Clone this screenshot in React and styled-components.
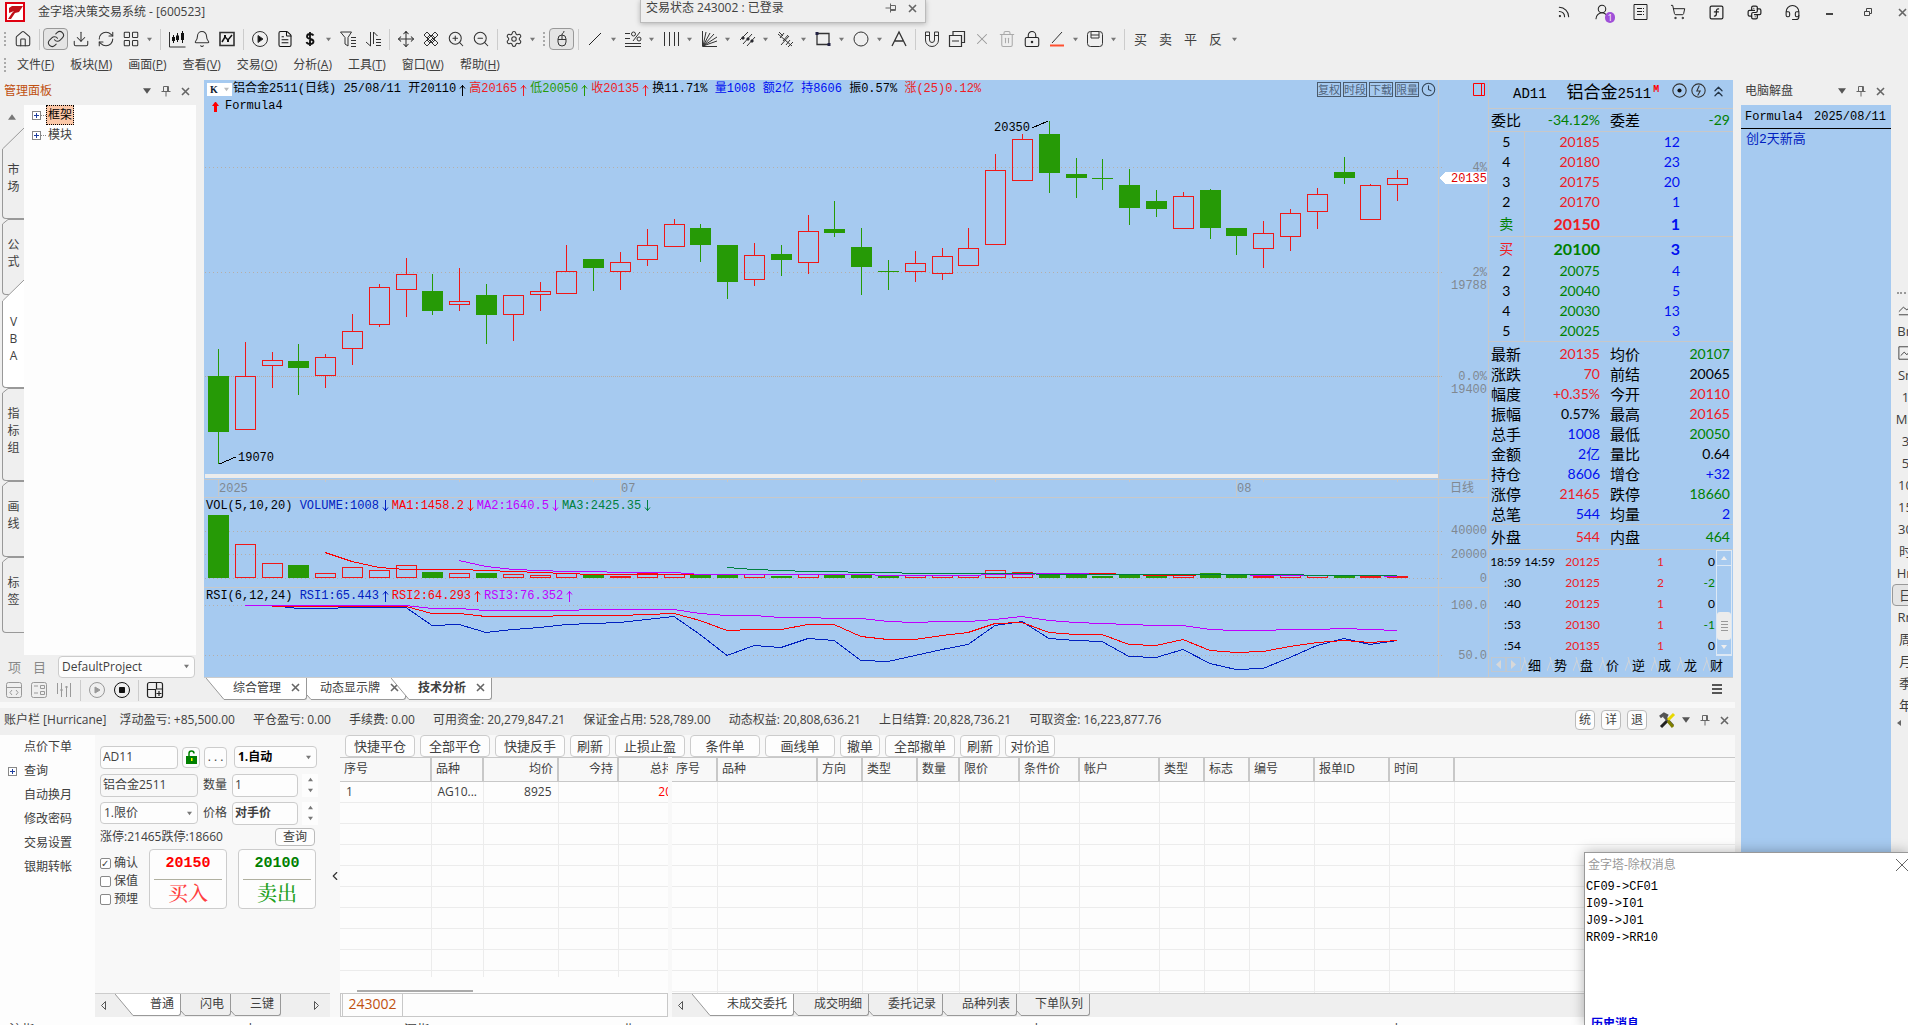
import styled, { createGlobalStyle, css } from 'styled-components';
import {
  House,
  Link,
  Download,
  RefreshCw,
  LayoutGrid,
  Bell,
  FileText,
  Move,
  ZoomIn,
  ZoomOut,
  Settings,
  X,
  Trash2,
  LockKeyhole,
  Rss,
  UserRound,
  ShoppingCart,
  SquareFunction,
  Headset,
  Clock,
  ChevronsUp,
  ChevronLeft,
} from 'lucide-react';
import { TbBrandPython } from 'react-icons/tb';

const ui = '"Open Sans", "Noto Sans CJK SC", sans-serif';
const mono = '"Liberation Mono", "Noto Sans CJK SC", monospace';
const lato = 'Lato, "Noto Sans CJK SC", sans-serif';
const sky = '#a6caf0';
const red = '#ee1c25';
const green = '#008000';
const blue = '#0010f0';

const GlobalStyle = createGlobalStyle`
  * { box-sizing: border-box; }
  body {
    margin: 0;
    background: #efefef;
    color: #404040;
    font: 12px/16px ${ui};
    overflow: hidden;
  }
  button, input, select { font: inherit; color: inherit; margin: 0; }
  button { background: none; border: 0; padding: 0; }
  table { border-collapse: collapse; table-layout: fixed; }
  svg { display: block; flex: none; }
`;

/* ---------- data ---------- */

// direction, high, body top, body bottom, low
const candles = [
  ['g', 269, 296, 352, 384], ['r', 262, 296, 350, 350], ['r', 272, 280, 286, 308],
  ['g', 264, 281, 288, 315], ['r', 274, 277, 296, 308], ['r', 234, 251, 269, 285],
  ['r', 204, 207, 245, 247], ['r', 178, 194, 210, 237], ['g', 194, 211, 231, 235],
  ['r', 188, 221, 225, 231], ['g', 204, 215, 235, 264], ['r', 215, 215, 235, 261],
  ['r', 202, 211, 215, 231], ['r', 165, 191, 214, 214], ['g', 179, 179, 188, 211],
  ['r', 172, 182, 192, 210], ['r', 149, 165, 180, 186], ['r', 139, 144, 167, 167],
  ['g', 144, 148, 165, 182], ['g', 165, 165, 202, 219], ['r', 163, 175, 200, 206],
  ['g', 165, 174, 180, 196], ['r', 135, 151, 183, 194], ['g', 121, 149, 153, 157],
  ['g', 148, 167, 187, 215], ['g', 180, 191, 192, 210], ['r', 171, 183, 192, 202],
  ['r', 168, 176, 194, 200], ['r', 148, 168, 186, 186], ['r', 74, 90, 165, 165],
  ['r', 54, 59, 101, 101], ['g', 41, 54, 93, 113], ['g', 78, 94, 98, 118],
  ['g', 79, 98, 99, 110], ['g', 89, 105, 128, 145], ['g', 110, 121, 129, 137],
  ['r', 112, 116, 149, 149], ['g', 109, 110, 148, 159], ['g', 148, 148, 156, 175],
  ['r', 141, 153, 169, 188], ['r', 129, 133, 157, 171], ['r', 108, 114, 132, 149],
  ['g', 77, 92, 98, 104], ['r', 104, 105, 140, 140], ['r', 90, 98, 105, 121],
];

const volumeTops = [
  435, 464, 483, 485, 493, 487, 490, 485, 492, 493, 493, 494, 495, 493, 495,
  496, 493, 494, 494, 494, 494, 496, 494, 495, 494, 496, 495, 495, 495, 490,
  492, 494, 494, 496, 494, 495, 494, 493, 495, 496, 495, 495, 495, 496, 496,
];

const volumeLines = [
  { color: '#ff0000', start: 4, ys: [472, 481, 487, 489, 489, 489, 490, 491, 492, 493, 494, 494, 494, 494, 494, 494, 494, 494, 494, 494, 494, 495, 495, 495, 495, 494, 493, 493, 493, 493, 494, 495, 495, 494, 494, 495, 495, 495, 495, 495, 496] },
  { color: '#c000ff', start: 9, ys: [480, 486, 489, 490, 491, 491, 492, 492, 492, 494, 494, 494, 494, 494, 494, 494, 495, 495, 495, 495, 494, 494, 493, 493, 494, 494, 494, 494, 494, 494, 495, 495, 495, 495, 495, 496] },
  { color: '#008040', start: 19, ys: [487, 489, 490, 491, 491, 492, 492, 493, 493, 493, 493, 493, 494, 494, 494, 494, 494, 494, 494, 494, 494, 494, 495, 495, 495, 495] },
];

const rsiLines = [
  { color: '#0020c0', start: 2, ys: [525, 528, 528, 527, 527, 527, 545, 544, 552, 549, 547, 544, 543, 542, 539, 536, 554, 575, 565, 567, 558, 560, 580, 581, 575, 569, 564, 545, 541, 558, 560, 561, 576, 577, 569, 583, 589, 588, 577, 565, 558, 564, 560] },
  { color: '#ff0000', start: 2, ys: [526, 526, 526, 526, 526, 526, 533, 533, 536, 536, 536, 535, 535, 535, 534, 533, 540, 550, 549, 549, 544, 544, 556, 559, 559, 555, 552, 543, 542, 552, 554, 554, 564, 565, 559, 570, 572, 571, 566, 562, 560, 562, 560] },
  { color: '#c000ff', start: 1, ys: [525, 525, 525, 525, 525, 525, 525, 528, 528, 530, 530, 530, 530, 529, 529, 529, 529, 533, 535, 535, 537, 537, 538, 538, 541, 542, 541, 541, 539, 536, 540, 542, 543, 544, 545, 545, 549, 550, 550, 549, 549, 548, 549, 550] },
];

const details = [
  ['最新', '20135', red, '均价', '20107', green],
  ['涨跌', '70', red, '前结', '20065', '#000'],
  ['幅度', '+0.35%', red, '今开', '20110', red],
  ['振幅', '0.57%', '#000', '最高', '20165', red],
  ['总手', '1008', blue, '最低', '20050', green],
  ['金额', '2亿', blue, '量比', '0.64', '#000'],
  ['持仓', '8606', blue, '增仓', '+32', blue],
  ['涨停', '21465', red, '跌停', '18660', green],
  ['总笔', '544', blue, '均量', '2', blue],
];

const asks = [['5', '20185', '12'], ['4', '20180', '23'], ['3', '20175', '20'], ['2', '20170', '1'], ['卖', '20150', '1']];
const bids = [['买', '20100', '3'], ['2', '20075', '4'], ['3', '20040', '5'], ['4', '20030', '13'], ['5', '20025', '3']];

const ticks = [
  ['18:59', '14:59', '20125', '1', '0'],
  [':30', '', '20125', '2', '-2'],
  [':40', '', '20125', '1', '0'],
  [':53', '', '20130', '1', '-1'],
  [':54', '', '20135', '1', '0'],
];

const orderColumns = [
  ['序号', 45], ['品种', 100], ['方向', 45], ['类型', 55], ['数量', 42], ['限价', 60], ['条件价', 60],
  ['帐户', 80], ['类型', 45], ['标志', 45], ['编号', 65], ['报单ID', 75], ['时间', 65], ['', null],
];

const actions = [
  ['快捷平仓', 70], ['全部平仓', 70], ['快捷反手', 70], ['刷新', 40], ['止损止盈', 70], ['条件单', 70],
  ['画线单', 70], ['撤单', 40], ['全部撤单', 70], ['刷新', 40], ['对价追', 50],
];

const accountInfo = [
  '账户栏 [Hurricane]', '浮动盈亏: +85,500.00', '平仓盈亏: 0.00', '手续费: 0.00', '可用资金: 20,279,847.21',
  '保证金占用: 528,789.00', '动态权益: 20,808,636.21', '上日结算: 20,828,736.21', '可取资金: 16,223,877.76',
];

const menus = [['文件', 'F'], ['板块', 'M'], ['画面', 'P'], ['查看', 'V'], ['交易', 'O'], ['分析', 'A'], ['工具', 'T'], ['窗口', 'W'], ['帮助', 'H']];

const periods = ['Bn', 'area', 'Sn', '1', 'Mn', '3', '5', '10', '15', '30', '时', 'Hn', '日', 'Rn', '周', '月', '季', '年'];

/* ---------- icons ---------- */

const Glyph = ({ size = 18, children, ...rest }) => (
  <svg width={size} height={size} viewBox='0 0 18 18' fill='none' stroke='#333' {...rest}>
    {children}
  </svg>
);

const Caret = ({ size = 6, color = '#777', up }) => (
  <svg width={size} height={size} viewBox='0 0 6 6' fill={color}>
    <path d={up ? 'M0 5h6L3 1z' : 'M0 1h6L3 5z'} />
  </svg>
);

const Pin = ({ rotate }) => (
  <svg width='12' height='12' viewBox='0 0 12 12' fill='none' stroke='#666' transform={rotate ? 'rotate(90)' : undefined}>
    <path d='M3.500 1.500h5v5h-5zM7.500 1.500v5M1.500 6.500h9M6 6.500v5' />
  </svg>
);

const Cross = () => (
  <svg width='9' height='9' viewBox='0 0 9 9' stroke='#666' strokeWidth='1.600'>
    <path d='M1 1l7 7M8 1L1 8' />
  </svg>
);

const drawn = {
  candles: <Glyph><path d='M1.500 2v15h16' /><path d='M5.500 5v8M9.500 3v9M14.500 1v12' stroke='#111' /><path d='M4 7h3v4H4zM8 5.500h3V10H8zM13 3h3v7h-3z' fill='#111' stroke='none' /></Glyph>,
  boxChart: <Glyph><path d='M2 2.500h14v13H2z' strokeWidth='1.600' /><path d='M4 12l3-5 3 3 4-5' stroke='#111' strokeWidth='1.500' /><path d='M6 5h2v2H6zM9 10h2v2H9z' fill='#111' stroke='none' /></Glyph>,
  play: <Glyph><circle cx='9' cy='9' r='7.500' /><path d='M7 5.500v7l5-3.500z' fill='#111' /></Glyph>,
  dollar: <Glyph stroke='#111' strokeWidth='1.800'><path d='M12.500 5.500C12 4.500 10.500 4 9 4 7 4 6 5 6 6.500 6 10 12.500 8 12.500 11.500 12.500 13 11 14 9 14c-2 0-3-.5-3.500-2M9 2v14' /></Glyph>,
  filter: <Glyph><path d='M1.500 2h11L9 7.500V16l-3-2V7.500zM12 7.500h5M12 10.500h5M12 13.500h5M12 16.500h5' /></Glyph>,
  sort: <Glyph><path d='M6.500 2v14L2 12M9.500 14V2l4 4M12 9.500h5M12 12.500h5M12 15.500h5' /></Glyph>,
  rulers: <Glyph><path d='M2 5l3-3 11 11-3 3zM2 13L13 2l3 3L5 16zM5 8l3-3M8 11l3-3M10 13l3-3M10 5l3 3M5 10l3 3' /></Glyph>,
  mouse: <Glyph><rect x='5' y='5' width='8' height='11' rx='4' /><path d='M5 9.500h8M9 5v4.500M9 5c0-3 2-1 2-4' /></Glyph>,
  line: <Glyph stroke='#222'><path d='M3 15L15 3' /></Glyph>,
  percent: <Glyph><path d='M1 3.500h5M1 8.500h5M1 13.500h16M1 16.500h16M16 2L9 11' /><circle cx='9.500' cy='4' r='2' /><circle cx='15' cy='9' r='2' /></Glyph>,
  bars: <Glyph><path d='M2.500 2v14M7.500 2v14M12.500 2v14M16.500 2v14' /></Glyph>,
  fan: <Glyph><path d='M2.500 1v15.500H17M3 16L6 2M3 16l7-13M3 16L14 4M3 16l14-9M3 16l14-5' /></Glyph>,
  parallels: <Glyph><path d='M2 10L10 2M5 14L14 4M9 16l8-9' /><path d='M4 7h2v2H4zM9 8h2v2H9zM13 10h2v2h-2z' fill='#113' /></Glyph>,
  fork: <Glyph><path d='M5 15L13 6M3 2l4 4M4 8l4-5M7 11l5-6M2 4l14 12M10 15l4-5M12 17l5-5' /></Glyph>,
  rect: <Glyph><path d='M3 3.500h12v11H3z' strokeWidth='1.300' /><path d='M1.500 2h3v3h-3zM13.500 13h3v3h-3z' fill='#224' stroke='none' /></Glyph>,
  ellipse: <Glyph><circle cx='9' cy='9' r='7' /></Glyph>,
  letter: <Glyph strokeWidth='1.300'><path d='M2 16L9 2l7 14M5 11h8' /></Glyph>,
  magnet: <Glyph><path d='M2.500 2h4v8a2.500 2.500 0 0 0 5 0V2h4v8a6.500 6.500 0 0 1-13 0zM2.500 5.500h4M11.500 5.500h4' /></Glyph>,
  stack: <Glyph strokeWidth='1.200'><path d='M1.500 5.500h12v11h-12zM5 5V1.500h11.500v11H14M4 11h7' /></Glyph>,
  angle: <Glyph><path d='M4 13L14 2' /><path d='M2 15.500h14' stroke='#ff5030' strokeWidth='2' /></Glyph>,
  save: <Glyph><rect x='1.500' y='1.500' width='15' height='15' rx='3' /><path d='M5 2v6h8V2M5 5h8' /></Glyph>,
};

const lucide = (Icon, color = '#333') => <Icon size={18} strokeWidth={1.4} color={color} />;

const tools = [
  lucide(House), 'sep', { icon: lucide(Link), on: true }, lucide(Download), lucide(RefreshCw), lucide(LayoutGrid), 'caret', 'sep',
  drawn.candles, lucide(Bell), drawn.boxChart, 'sep', drawn.play, lucide(FileText, '#111'), drawn.dollar, 'caret',
  drawn.filter, drawn.sort, 'sep', lucide(Move), drawn.rulers, lucide(ZoomIn), lucide(ZoomOut), 'sep',
  lucide(Settings), 'caret', 'grip', { icon: drawn.mouse, on: true }, 'sep', drawn.line, 'caret', drawn.percent, 'caret',
  drawn.bars, 'caret', drawn.fan, 'caret', drawn.parallels, 'caret', drawn.fork, 'caret', drawn.rect, 'caret',
  drawn.ellipse, 'caret', drawn.letter, 'sep', drawn.magnet, drawn.stack, lucide(X, '#999'), lucide(Trash2, '#aaa'),
  lucide(LockKeyhole, '#222'), drawn.angle, 'caret', drawn.save, 'caret', 'sep', '买', '卖', '平', '反', 'caret',
];

const UserBadge = () => (
  <Stack>
    <UserRound size={18} strokeWidth={1.4} />
    <Badge>1</Badge>
  </Stack>
);

const windowIcons = [
  <Rss size={14} strokeWidth={1.8} />,
  <UserBadge />,
  <svg width='15' height='18' viewBox='0 0 15 18' fill='none' stroke='#222'>
    <path d='M1 1.500h13v15H1zM4 5.500h5M4 8.500h5M4 11.500h5M10 5.500h1M10 8.500h1M10 11.500h1' />
  </svg>,
  <ShoppingCart size={16} strokeWidth={1.5} />,
  <SquareFunction size={17} strokeWidth={1.7} />,
  <TbBrandPython size={17} strokeWidth={1.7} />,
  <Headset size={17} strokeWidth={1.5} />,
  <svg width='8' height='10' stroke='#444' strokeWidth='2'><path d='M0 7h7' /></svg>,
  <svg width='10' height='10' fill='none' stroke='#444'><path d='M1.500 4.500h5v4h-5zM3.500 4V1.500h5v5H7' /></svg>,
];

/* ---------- chart ---------- */

const at = (i) => Math.round(14 + 26.8 * i);
const tone = (dir) => (dir === 'g' ? '#269a06' : '#f01818');

const Grid = ({ y, dense }) => (
  <line x1='1' x2='1238' y1={y + 0.5} y2={y + 0.5} stroke='#b5aea8' strokeDasharray={dense ? '1 1' : '1 3'} />
);

const Lines = ({ lines }) =>
  lines.map(({ color, start, ys }) => (
    <polyline
      key={color}
      fill='none'
      stroke={color}
      points={ys.map((y, i) => `${at(start + i)},${y + 0.5}`).join(' ')}
    />
  ));

const Candle = ({ x, dir, high, top, bottom, low }) => (
  <g stroke={tone(dir)} fill={dir === 'g' ? tone(dir) : 'none'}>
    <path d={`M${x + 0.5} ${high}V${top}M${x + 0.5} ${bottom}V${low}`} />
    {bottom - top > 1 ? (
      <rect x={x - 9.5} y={top + 0.5} width='20' height={bottom - top - 1} />
    ) : (
      <path d={`M${x - 10} ${top + 0.5}h21`} />
    )}
  </g>
);

const PriceChart = () => (
  <Plot viewBox='0 34 1284 384'>
    <Grid y={87} />
    <Grid y={192} />
    <Grid y={296} dense />
    {candles.map(([dir, high, top, bottom, low], i) => (
      <Candle key={i} x={at(i)} dir={dir} high={high} top={top} bottom={bottom} low={low} />
    ))}
    <path d='M15.500 384l16-7M828 48l16-7' stroke='#000' fill='none' />
    <text x='34' y='381'>19070</text>
    <text x='790' y='51'>20350</text>
    <rect x='1' y='394' width='1233' height='4' fill='#ececec' />
    <path d='M0 399.500h1284M0 417.500h1284M1234.500 34V416' stroke='#c8c8c8' />
    {[4, 9, 14, 19, 24, 29, 34, 39, 44].map((i) => (
      <path key={i} d={`M${at(i) + 0.5} 400v2`} stroke='#c8c8c8' />
    ))}
    {[[0, '2025'], [15, '07'], [38, '08']].map(([i, label]) => (
      <g key={label}>
        <path d={`M${at(i) + 0.5} 400v16`} stroke='#c8c8c8' />
        <text className='axis' x={at(i) + 1} y='412'>{label}</text>
      </g>
    ))}
    <g className='axis' textAnchor='end'>
      <text x='1283' y='91'>4%</text>
      <text x='1283' y='196'>2%</text>
      <text x='1283' y='209'>19788</text>
      <text x='1283' y='300'>0.0%</text>
      <text x='1283' y='313'>19400</text>
      <text x='1270' y='412'>日线</text>
    </g>
    <path d='M1235 98l7-6h41v12h-41z' fill='#fff' />
    <text x='1283' y='102' textAnchor='end' fill='#e00000'>20135</text>
  </Plot>
);

const VolumeChart = () => (
  <Plot viewBox='0 434 1284 74'>
    <Grid y={451} />
    <Grid y={474} />
    <Grid y={498} />
    {volumeTops.map((top, i) => (
      <rect
        key={i}
        x={at(i) - 9.5}
        y={top + 0.5}
        width='20'
        height={497 - top}
        stroke={tone(candles[i][0])}
        fill={candles[i][0] === 'g' ? tone('g') : 'none'}
      />
    ))}
    <Lines lines={volumeLines} />
    <path d='M0 507.500h1284M1234.500 434V507' stroke='#c8c8c8' />
    <g className='axis' textAnchor='end'>
      <text x='1283' y='454'>40000</text>
      <text x='1283' y='478'>20000</text>
      <text x='1283' y='502'>0</text>
    </g>
  </Plot>
);

const RsiChart = () => (
  <Plot viewBox='0 524 1284 73'>
    <Grid y={525} />
    <Grid y={575} />
    <Lines lines={rsiLines} />
    <path d='M1234.500 524V597' stroke='#c8c8c8' />
    <g className='axis' textAnchor='end'>
      <text x='1283' y='529'>100.0</text>
      <text x='1283' y='579'>50.0</text>
    </g>
  </Plot>
);

const Legend = ({ items, children, height, lead }) => (
  <LegendRow $height={height}>
    <LegendMain>
      {lead}
      {items.map(([text, color, arrow]) => (
        <Tone key={text} $color={color}>
          {text}
          {arrow && (
            <TrendArrow viewBox='0 0 13 12'>
              <path d={arrow === 'up' ? 'M6.500 12V1M4 4.500L6.500 1.500 9 4.500' : 'M6.500 0v11M4 7.500L6.500 10.500 9 7.500'} />
            </TrendArrow>
          )}
        </Tone>
      ))}
    </LegendMain>
    <LegendAxis>{children}</LegendAxis>
  </LegendRow>
);

const ChartPanel = () => (
  <ChartColumn>
    <Legend
      height={19}
      lead={<PeriodButton><b>K</b><Caret size={5} color='#bbb' /></PeriodButton>}
      items={[
        ['铝合金2511(日线) 25/08/11 ', '#000'], ['开20110', '#000', 'up'], ['高20165', red, 'up'],
        ['低20050', '#269a06', 'up'], ['收20135', red, 'up'], ['换11.71% ', '#000'], ['量1008 ', blue],
        ['额2亿 ', blue], ['持8606 ', blue], ['振0.57% ', '#000'], ['涨(25)0.12%', red],
      ]}
    >
      <svg width='12' height='13' fill='none' stroke='#f00'><path d='M.5.5h11v12H.5zM8.500.5v12' /></svg>
    </Legend>
    <Legend
      height={15}
      lead={<FormulaMark viewBox='0 0 7 10'><path d='M0 4l3-4h1l3 4H5v6H2V4z' fill='#f00' /></FormulaMark>}
      items={[['Formula4', '#000']]}
    />
    <PriceChart />
    <Legend
      height={16}
      items={[
        ['VOL(5,10,20) ', '#000'], ['VOLUME:1008', '#0020c0', 'down'], ['MA1:1458.2', '#f00', 'down'],
        ['MA2:1640.5', '#c000ff', 'down'], ['MA3:2425.35', '#008040', 'down'],
      ]}
    />
    <VolumeChart />
    <Legend
      height={16}
      items={[
        ['RSI(6,12,24) ', '#000'], ['RSI1:65.443', '#0020c0', 'up'], ['RSI2:64.293', '#f00', 'up'],
        ['RSI3:76.352', '#c000ff', 'up'],
      ]}
    />
    <RsiChart />
    <ChartButtons>
      {['复权', '时段', '下载', '限量'].map((label) => <ChartButton key={label}>{label}</ChartButton>)}
      <Clock size={15} strokeWidth={1.7} color='#345' />
    </ChartButtons>
  </ChartColumn>
);

/* ---------- quote panel ---------- */

const Levels = ({ rows, color, labelColor }) => (
  <QuoteTable>
    <colgroup><col width='35' /><col width='76' /><col width='80' /><col /></colgroup>
    <tbody>
      {rows.map(([level, price, volume]) => {
        const best = level === '卖' || level === '买';
        return (
          <LevelRow key={level} $best={best}>
            <LevelCell $color={best ? labelColor : '#000'}>{level}</LevelCell>
            <Num $color={color}>{price}</Num>
            <Num $color={blue}>{volume}</Num>
            <td />
          </LevelRow>
        );
      })}
    </tbody>
  </QuoteTable>
);

const DetailTable = ({ rows, height = 20 }) => (
  <QuoteTable>
    <colgroup><col width='45' /><col width='66' /><col width='53' /><col width='77' /><col /></colgroup>
    <tbody>
      {rows.map(([a, av, ac, b, bv, bc]) => (
        <DetailRow key={a} $height={height}>
          <LabelCell $pad={2}>{a}</LabelCell>
          <Num $color={ac}>{av}</Num>
          <LabelCell $pad={10}>{b}</LabelCell>
          <Num $color={bc}>{bv}</Num>
          <td />
        </DetailRow>
      ))}
    </tbody>
  </QuoteTable>
);

const QuotePanel = () => (
  <Quote>
    <QuoteTitle>
      <span>AD11</span>
      <QuoteName><big>铝合金</big>2511<sup>M</sup></QuoteName>
      <Glyph size={15} strokeWidth='1.300'><circle cx='9' cy='9' r='8' /><circle cx='9' cy='9' r='2.500' fill='#111' stroke='none' /></Glyph>
      <Glyph size={15} strokeWidth='1.300'><circle cx='9' cy='9' r='8' /><path d='M10 3L7 9.500h4L8 15' /></Glyph>
      <ChevronsUp size={17} strokeWidth={1.7} />
    </QuoteTitle>
    <QuoteBlock>
      <DetailTable height={22} rows={[['委比', '-34.12%', green, '委差', '-29', green]]} />
    </QuoteBlock>
    <QuoteBlock>
      <Levels rows={asks} color={red} labelColor={green} />
    </QuoteBlock>
    <QuoteBlock>
      <Levels rows={bids} color={green} labelColor={red} />
    </QuoteBlock>
    <QuoteBlock $gap>
      <DetailTable rows={details} />
    </QuoteBlock>
    <QuoteBlock>
      <DetailTable height={24} rows={[['外盘', '544', red, '内盘', '464', green]]} />
    </QuoteBlock>
    <TickArea>
      <TickTable>
        <colgroup><col width='32' /><col width='34' /><col width='45' /><col width='64' /><col /></colgroup>
        <tbody>
          {ticks.map(([time, second, price, volume, delta]) => (
            <tr key={time}>
              <Num $color='#000'>{time}</Num>
              <Num $color='#000'>{second}</Num>
              <Num $color={red}>{price}</Num>
              <Num $color={red}>{volume}</Num>
              <Num $color={delta === '0' ? '#000' : green}>{delta}</Num>
            </tr>
          ))}
        </tbody>
      </TickTable>
      <TickScroll>
        <ScrollArrow><Caret color='#eee' up /></ScrollArrow>
        <ScrollThumb><i /><i /><i /><i /></ScrollThumb>
        <ScrollArrow><Caret color='#eee' /></ScrollArrow>
      </TickScroll>
    </TickArea>
    <QuoteTabs>
      <ArrowBox><svg width='5' height='9'><path d='M5 0v9L0 4.500z' fill='#d8d8d8' /></svg></ArrowBox>
      <ArrowBox><svg width='5' height='9'><path d='M0 0v9l5-4.500z' fill='#d8d8d8' /></svg></ArrowBox>
      {['细', '势', '盘', '价', '逆', '成', '龙', '财'].map((tab) => (
        <QuoteTab key={tab}>
          <svg width='7' height='15' stroke='#d0d4d8' fill='none'><path d='M3 0l4 14M0 14L4 3' /></svg>
          {tab}
        </QuoteTab>
      ))}
    </QuoteTabs>
  </Quote>
);

/* ---------- small shared parts ---------- */

const SlantTab = ({ children, slant, white, width, bold, closable, overlap }) => {
  const fill = white ? '#fff' : '#efefef';
  return (
    <TabButton $width={width} $bold={bold} $overlap={overlap}>
      <svg width={slant ? 20 : 5} height='22' fill={fill} stroke='#999'>
        <path d={slant ? 'M20 0H0l18 21.500h2' : 'M5 0H0v17l4 4.500h1'} stroke='none' />
        <path d={slant ? 'M0 0l18 21.500h2' : 'M0 17l4 4.500h1'} fill='none' />
      </svg>
      <TabLabel $fill={fill}>
        {children}
        {closable && <Cross />}
      </TabLabel>
    </TabButton>
  );
};

const SideTab = ({ label, slope, height, active }) => (
  <SideButton $height={height} $active={active}>
    <svg width='22' height={slope} fill='#fff' stroke='#999'>
      {active && <path d={`M22 0L0 ${slope}H22z`} stroke='none' />}
      <path d={slope > 10 ? `M22 0L.5 ${slope}` : `M22 .5H6L.5 ${slope}`} fill='none' />
    </svg>
    <SideLabel $active={active}>{label.split('').map((ch) => <span key={ch}>{ch}</span>)}</SideLabel>
  </SideButton>
);

const PanelTools = () => (
  <ToolTrio>
    <Caret size={8} color='#555' />
    <Pin />
    <Cross />
  </ToolTrio>
);

const Plus = () => (
  <svg width='9' height='9' viewBox='0 0 9 9' fill='#fff' stroke='#888'>
    <rect x='.5' y='.5' width='8' height='8' />
    <path d='M2 4.500h5M4.500 2v5' stroke='#2040a0' />
  </svg>
);

const Spinner = ({ name }) => (
  <SpinBox>
    <button aria-label={`${name} +`}><Caret size={5} up /></button>
    <button aria-label={`${name} -`}><Caret size={5} /></button>
  </SpinBox>
);

/* ---------- sections ---------- */

const TopBars = () => (
  <header>
    <TitleBar>
      <svg width='20' height='20' viewBox='0 0 20 20'>
        <path d='M0 0h20v20H0z' fill='#e00010' />
        <path d='M2 2h16v16H2z' fill='#fff' />
        <path d='M4 6l3-2h11l-4 6-4 1-4 6H3l4-6 2-2-5 2z' fill='#c01018' />
      </svg>
      <AppTitle>金字塔决策交易系统 - [600523]</AppTitle>
      <WindowTools>
        {windowIcons.map((icon, i) => <WindowButton key={i}>{icon}</WindowButton>)}
        <CloseButton><Cross /></CloseButton>
      </WindowTools>
    </TitleBar>
    <Toolbar>
      <Grip />
      {tools.map((tool, i) => {
        if (tool === 'sep') return <Separator key={i} />;
        if (tool === 'grip') return <Grip key={i} />;
        if (tool === 'caret') return <CaretButton key={i}><Caret size={5} /></CaretButton>;
        return <ToolButton key={i} $on={tool.on}>{tool.icon || tool}</ToolButton>;
      })}
    </Toolbar>
    <MenuBar>
      <Grip />
      {menus.map(([label, key]) => <button key={key}>{label}(<u>{key}</u>)</button>)}
    </MenuBar>
    <LoginStatus>
      <span>交易状态 243002 : 已登录</span>
      <Pin rotate />
      <Cross />
    </LoginStatus>
  </header>
);

const ManagePanel = () => (
  <Manage>
    <PanelHead $orange>管理面板<PanelTools /></PanelHead>
    <ManageBody>
      <SideTabs>
        <SideScroll><Caret size={8} up /></SideScroll>
        <SideTab label='市场' slope={21} height={91} />
        <SideTab label='公式' slope={5} height={76} />
        <SideTab label='VBA' slope={21} height={108} active />
        <SideTab label='指标组' slope={5} height={93} />
        <SideTab label='画线' slope={5} height={76} />
        <SideTab label='标签' slope={5} height={76} />
      </SideTabs>
      <Tree>
        <li><Plus /><i /><TreeLabel $selected>框架</TreeLabel></li>
        <li><Plus /><i /><TreeLabel>模块</TreeLabel></li>
      </Tree>
    </ManageBody>
    <ProjectRow>
      <button>项</button>
      <button>目</button>
      <SelectBox $flex>
        <select aria-label='项目'><option>DefaultProject</option></select>
        <Caret size={5} />
      </SelectBox>
    </ProjectRow>
    <ProjectTools>
      <Glyph stroke='#999'><rect x='1.500' y='1.500' width='15' height='15' rx='2' /><path d='M2 6.500h14M7 9l-2 2.500L7 14M11 9l2 2.500L11 14' /></Glyph>
      <Glyph stroke='#999'><rect x='1.500' y='1.500' width='15' height='15' rx='2' /><path d='M4 5h4M4 12h4M10.500 4.500h4v3h-4zM10.500 10.500h4v3h-4z' /></Glyph>
      <Glyph stroke='#999'><path d='M2.500 2v11M6.500 2v14M11.500 5v11M15.500 2v14M5 9h3M10 6h3' /></Glyph>
      <Separator />
      <Glyph stroke='#999'><circle cx='9' cy='9' r='7.500' /><path d='M7 6v6l5-3z' fill='#999' /></Glyph>
      <Glyph stroke='#111'><circle cx='9' cy='9' r='7.500' /><path d='M6.500 6.500h5v5h-5z' fill='#111' /></Glyph>
      <Separator />
      <Glyph stroke='#222' strokeWidth='1.200'><rect x='1.500' y='1.500' width='15' height='15' rx='2' /><path d='M10.500 2v6h6M2 8.500h7.500v8M13 10v5M10.500 12.500h5' /></Glyph>
    </ProjectTools>
  </Manage>
);

const OrderForm = () => (
  <OrderPane>
    <Form onSubmit={(e) => e.preventDefault()}>
      <FormRow>
        <Field $width={78} aria-label='合约' defaultValue='AD11' />
        <IconButton $width={18} aria-label='锁定'>
          <svg width='11' height='14' viewBox='0 0 11 14'>
            <path d='M3 7V3.500C3 2 4 1 5.500 1S8 2 8 3.500' fill='none' stroke='#008000' strokeWidth='1.500' />
            <path d='M0 6h11v8H0z' fill='#008000' /><path d='M5 8h1.500v3H5z' fill='#ff0' />
          </svg>
        </IconButton>
        <IconButton $width={23}>. . .</IconButton>
        <SelectBox $width={83} $bold>
          <select aria-label='自动'><option>1.自动</option></select>
          <Caret size={5} />
        </SelectBox>
      </FormRow>
      <FormRow>
        <Field $width={98} $muted aria-label='名称' defaultValue='铝合金2511' />
        <label htmlFor='amount'>数量</label>
        <Field $width={66} id='amount' defaultValue='1' />
        <Spinner name='数量' />
      </FormRow>
      <FormRow>
        <SelectBox $width={98}>
          <select aria-label='限价'><option>1.限价</option></select>
          <Caret size={5} />
        </SelectBox>
        <label htmlFor='price'>价格</label>
        <Field $width={66} $bold id='price' defaultValue='对手价' />
        <Spinner name='价格' />
      </FormRow>
      <LimitRow>
        <span>涨停:21465跌停:18660</span>
        <QueryButton>查询</QueryButton>
      </LimitRow>
      <TradeRow>
        <Checks>
          <label><input type='checkbox' defaultChecked />确认</label>
          <label><input type='checkbox' />保值</label>
          <label><input type='checkbox' />预埋</label>
        </Checks>
        <TradeButton $color='#f00' $soft='#ff4040'><b>20150</b><span>买入</span></TradeButton>
        <TradeButton $color='#008000' $soft='#20a020'><b>20100</b><span>卖出</span></TradeButton>
      </TradeRow>
    </Form>
    <FooterTabs>
      <ScrollHint><svg width='5' height='9' fill='none' stroke='#555'><path d='M4.500.5v8l-4-4z' /></svg></ScrollHint>
      <SlantTab slant white width={66}>普通</SlantTab>
      <SlantTab width={50}>闪电</SlantTab>
      <SlantTab width={50}>三键</SlantTab>
      <ScrollHint $end><svg width='5' height='9' fill='none' stroke='#555'><path d='M.5.5v8l4-4z' /></svg></ScrollHint>
    </FooterTabs>
  </OrderPane>
);

const GridRows = ({ count, columns }) =>
  Array.from({ length: count }, (_, r) => (
    <tr key={r}>{Array.from({ length: columns }, (_, c) => <td key={c} />)}</tr>
  ));

const Tables = () => (
  <TablesPane>
    <ActionRow>
      {actions.map(([label, width], i) => <ActionButton key={i} $width={width}>{label}</ActionButton>)}
    </ActionRow>
    <TableSplit>
      <PositionPane>
        <TableClip>
          <DataTable $width='338px'>
            <colgroup><col width='91' /><col width='52' /><col width='75' /><col width='60' /><col width='60' /></colgroup>
            <thead>
              <tr><th>序号</th><th>品种</th><Right>均价</Right><Right>今持</Right><Right>总持</Right></tr>
            </thead>
            <tbody>
              <tr><td>1</td><td>AG10...</td><RightCell>8925</RightCell><td /><RightCell $color='#f00'>20</RightCell></tr>
              <GridRows count={8} columns={5} />
              <ShortRow><td /><td /><td /><td /><td /></ShortRow>
            </tbody>
          </DataTable>
        </TableClip>
        <HScroll><i /></HScroll>
        <AccountTabs><button>243002</button></AccountTabs>
      </PositionPane>
      <OrdersPane>
        <TableClip>
          <DataTable $width='100%'>
            <colgroup>{orderColumns.map(([, width], i) => <col key={i} width={width || undefined} />)}</colgroup>
            <thead><tr>{orderColumns.map(([name], i) => <th key={i}>{name}</th>)}</tr></thead>
            <tbody><GridRows count={11} columns={orderColumns.length} /></tbody>
          </DataTable>
        </TableClip>
        <FooterTabs>
          <ScrollHint><svg width='5' height='9' fill='none' stroke='#555'><path d='M4.500.5v8l-4-4z' /></svg></ScrollHint>
          <SlantTab slant white width={102}>未成交委托</SlantTab>
          <SlantTab width={75}>成交明细</SlantTab>
          <SlantTab width={74}>委托记录</SlantTab>
          <SlantTab width={74}>品种列表</SlantTab>
          <SlantTab width={73}>下单队列</SlantTab>
        </FooterTabs>
      </OrdersPane>
    </TableSplit>
  </TablesPane>
);

const AccountPanel = () => (
  <Account>
    <AccountBar>
      {accountInfo.map((text) => <span key={text}>{text}</span>)}
      <AccountTools>
        {['统', '详', '退'].map((text) => <SquareButton key={text}>{text}</SquareButton>)}
        <HammerIcon viewBox='0 0 17 17' fill='none' strokeWidth='3'>
          <path d='M2 15L9 8' stroke='#222' /><path d='M1 5l4-3 4 2M5 4l9 10' stroke='#555' />
          <path d='M9 8l6-6' stroke='#e8d800' /><path d='M9 9l5 6' stroke='#808000' />
        </HammerIcon>
        <PanelTools />
      </AccountTools>
    </AccountBar>
    <AccountBody>
      <SideMenu>
        <a href='#order'>点价下单</a>
        <a href='#query'><Plus />查询</a>
        <a href='#roll'>自动换月</a>
        <a href='#password'>修改密码</a>
        <a href='#settings'>交易设置</a>
        <a href='#transfer'>银期转帐</a>
      </SideMenu>
      <OrderForm />
      <Collapse aria-label='收起'><ChevronLeft size={14} color='#333' /></Collapse>
      <Tables />
    </AccountBody>
    <Ticker>
      <span>沪指</span><em>(</em><em>)</em><span>点</span><span>深指</span><em>(</em><em>)</em><span>业</span>
      <span>300</span><em>(</em><em>)</em><span>点</span><span>50</span><em>(</em><em>)</em><span>点</span>
    </Ticker>
  </Account>
);

const App = () => (
  <Page>
    <GlobalStyle />
    <TopBars />
    <Workspace>
      <MainColumn>
        <UpperRow>
          <ManagePanel />
          <ChartArea>
            <ChartBody>
              <ChartPanel />
              <QuotePanel />
            </ChartBody>
            <ChartTabs>
              <SlantTab slant white closable width={101}>综合管理</SlantTab>
              <SlantTab white closable width={99}>动态显示牌</SlantTab>
              <SlantTab slant white closable bold overlap width={101}>技术分析</SlantTab>
              <MenuIcon viewBox='0 0 10 10'><path d='M0 1h10M0 5h10M0 9h10' stroke='#555' strokeWidth='2' /></MenuIcon>
            </ChartTabs>
          </ChartArea>
        </UpperRow>
        <AccountPanel />
      </MainColumn>
      <Insight>
        <PanelHead>电脑解盘<PanelTools /></PanelHead>
        <InsightBody>
          <InsightTitle><span>Formula4</span><span>2025/08/11</span></InsightTitle>
          <p>创2天新高</p>
        </InsightBody>
      </Insight>
      <PeriodStrip>
        <Dots />
        <PeriodItem><Glyph size={16}><path d='M1 12l5-5 4 3 6-6M1 15.500h16' /></Glyph></PeriodItem>
        {periods.map((p) => (
          <PeriodItem key={p} $on={p === '日'}>
            {p === 'area' ? <Glyph size={16}><path d='M1 2h16v14H1zM3 12l4-4 3 3 5-6' /></Glyph> : p}
          </PeriodItem>
        ))}
        <StripArrow viewBox='0 0 4 6' fill='#666'><path d='M4 0v6L0 3z' /></StripArrow>
      </PeriodStrip>
    </Workspace>
    <Notice>
      <NoticeHead>
        金字塔-除权消息
        <button aria-label='关闭'>
          <svg width='12' height='12' stroke='#666'><path d='M0 0l12 12M12 0L0 12' /></svg>
        </button>
      </NoticeHead>
      <NoticeList>
        <li>CF09-&gt;CF01</li>
        <li>I09-&gt;I01</li>
        <li>J09-&gt;J01</li>
        <li>RR09-&gt;RR10</li>
      </NoticeList>
      <a href='#history'>历史消息</a>
    </Notice>
  </Page>
);

/* ---------- styles ---------- */

const Page = styled.div`
  position: relative;
  display: flex;
  flex-direction: column;
  height: 100vh;
  overflow: hidden;
`;

const TitleBar = styled.div`
  display: flex;
  align-items: center;
  height: 25px;
  padding: 0 0 1px 5px;
`;

const AppTitle = styled.span`
  flex: 1;
  padding-left: 13px;
`;

const WindowTools = styled.div`
  display: flex;
  align-items: center;
  color: #222;
`;

const WindowButton = styled.button`
  display: grid;
  place-items: center;
  width: 38px;
  height: 24px;
`;

const CloseButton = styled(WindowButton)`
  width: 21px;
  justify-items: end;
  padding-right: 1px;
`;

const Stack = styled.span`
  position: relative;
`;

const Badge = styled.span`
  position: absolute;
  left: 12px;
  top: 9px;
  width: 10px;
  height: 11px;
  border-radius: 5px;
  background: #a050d8;
  color: #fff;
  font-size: 9px;
  line-height: 11px;
`;

const Toolbar = styled.div`
  display: flex;
  align-items: center;
  height: 28px;
`;

const ToolButton = styled.button`
  display: grid;
  place-items: center;
  width: 25px;
  height: 22px;
  font-size: 13px;
  border-radius: 4px;
  ${(p) => p.$on && css`
    border: 1px solid #999;
    background: #e4e4e4;
  `}
`;

const CaretButton = styled.button`
  display: grid;
  place-items: center;
  width: 13px;
  height: 22px;
`;

const Separator = styled.span`
  width: 1px;
  height: 21px;
  margin: 0 3px 0 4px;
  background: #ccc;
`;

const Grip = styled.span`
  width: 2px;
  height: 15px;
  margin: 0 4px;
  background: repeating-linear-gradient(#aaa 0 2px, transparent 2px 4px);
`;

const MenuBar = styled.nav`
  display: flex;
  align-items: center;
  gap: 16px;
  height: 27px;
  padding-bottom: 3px;
  ${Grip} {
    margin-right: -5px;
  }
`;

const LoginStatus = styled.div`
  position: absolute;
  left: 640px;
  top: 0;
  display: flex;
  align-items: center;
  gap: 11px;
  width: 286px;
  height: 23px;
  padding: 0 8px 6px 5px;
  background: #efefef;
  border: solid #bbb;
  border-width: 0 1px 1px;
  box-shadow: 0 1px 5px rgba(0, 0, 0, 0.25);
  span {
    flex: 1;
  }
`;

const Workspace = styled.main`
  display: flex;
  flex: 1;
  min-height: 0;
`;

const MainColumn = styled.div`
  display: flex;
  flex-direction: column;
  flex: 1;
  min-width: 0;
  margin-right: 6px;
`;

const UpperRow = styled.div`
  display: flex;
  padding-right: 2px;
  border-bottom: 6px solid #f8f8f8;
`;

/* left panel */

const Manage = styled.section`
  display: flex;
  flex-direction: column;
  width: 204px;
  padding-right: 8px;
`;

const PanelHead = styled.div`
  display: flex;
  align-items: center;
  justify-content: space-between;
  height: 25px;
  padding: 0 6px 3px 4px;
  color: ${(p) => (p.$orange ? '#c05010' : '#404040')};
`;

const ToolTrio = styled.div`
  display: flex;
  align-items: center;
  gap: 9px;
`;

const ManageBody = styled.div`
  display: flex;
  flex: 1;
`;

const SideTabs = styled.div`
  display: flex;
  flex-direction: column;
  width: 24px;
  padding-left: 2px;
`;

const SideScroll = styled.button`
  display: grid;
  place-items: center;
  height: 23px;
  padding-right: 3px;
`;

const SideButton = styled.button`
  display: flex;
  flex-direction: column;
  width: 22px;
  height: ${(p) => p.$height}px;
  margin-top: ${(p) => (p.$active ? -15 : 0)}px;
`;

const SideLabel = styled.span`
  display: flex;
  flex-direction: column;
  align-items: center;
  justify-content: center;
  flex: 1;
  width: 22px;
  padding-bottom: 12px;
  border: solid #999;
  border-width: 0 0 1px 1px;
  border-radius: 0 0 0 4px;
  line-height: 17px;
  background: ${(p) => (p.$active ? '#fff' : 'none')};
`;

const Tree = styled.ul`
  flex: 1;
  margin: 0;
  padding: 0 0 0 8px;
  background: #fdfdfd;
  list-style: none;
  li {
    display: flex;
    align-items: center;
    height: 20px;
  }
  i {
    width: 5px;
    border-top: 1px dotted #888;
  }
`;

const TreeLabel = styled.button`
  height: 20px;
  padding: 0 2px;
  color: ${(p) => (p.$selected ? '#000' : '#404040')};
  ${(p) => p.$selected && css`
    background: #fcc8a8;
    outline: 1px dotted #000;
    outline-offset: -1px;
  `}
`;

const ProjectRow = styled.div`
  display: flex;
  align-items: center;
  gap: 12px;
  height: 23px;
  padding: 0 1px 0 8px;
  color: #888;
  font-size: 13px;
`;

const ProjectTools = styled.div`
  display: flex;
  align-items: center;
  gap: 7px;
  height: 24px;
  padding-left: 5px;
  ${Separator} {
    margin: 0;
  }
`;

const SelectBox = styled.span`
  display: flex;
  align-items: center;
  height: 22px;
  padding: 0 5px 0 3px;
  background: #fdfdfd;
  border: 1px solid #ccc;
  border-radius: 4px;
  color: ${(p) => (p.$bold ? '#000' : '#404040')};
  font-weight: ${(p) => (p.$bold ? 700 : 400)};
  font-size: 12px;
  ${(p) => (p.$flex ? 'flex: 1;' : `width: ${p.$width}px;`)}
  select {
    appearance: none;
    flex: 1;
    min-width: 0;
    padding: 0;
    border: 0;
    background: none;
  }
`;

/* chart */

const ChartArea = styled.section`
  display: flex;
  flex-direction: column;
  flex: 1;
  min-width: 0;
`;

const ChartBody = styled.div`
  display: flex;
  background: ${sky};
`;

const ChartColumn = styled.div`
  position: relative;
  flex: 1;
  min-width: 0;
`;

const Plot = styled.svg`
  width: 100%;
  height: auto;
  overflow: visible;
  shape-rendering: crispEdges;
  text {
    font: 12px ${mono};
    stroke: none;
  }
  .axis,
  .axis text {
    fill: #808890;
  }
`;

const LegendRow = styled.div`
  display: grid;
  grid-template-columns: minmax(0, 1fr) 49px;
  height: ${(p) => p.$height}px;
  font: 12px/15px ${mono};
  white-space: pre;
`;

const LegendMain = styled.div`
  display: flex;
  align-items: center;
  padding-left: 2px;
  border-right: 1px solid #c8c8c8;
`;

const LegendAxis = styled.div`
  display: flex;
  align-items: center;
  justify-content: flex-end;
  padding-right: 3px;
`;

const Tone = styled.span`
  display: flex;
  align-items: center;
  color: ${(p) => p.$color};
`;

const TrendArrow = styled.svg`
  width: 13px;
  height: 12px;
  fill: none;
  stroke: currentColor;
`;

const PeriodButton = styled.button`
  display: flex;
  align-items: center;
  justify-content: space-around;
  width: 25px;
  height: 13px;
  margin: 0 1px;
  background: #fff;
  color: #123;
  font: 10px/13px 'Liberation Serif', serif;
`;

const FormulaMark = styled.svg`
  width: 7px;
  height: 10px;
  margin: 0 6px;
`;

const ChartButtons = styled.div`
  position: absolute;
  top: 2px;
  right: 52px;
  display: flex;
  align-items: center;
  gap: 2px;
`;

const ChartButton = styled.button`
  width: 24px;
  height: 15px;
  border: 1px solid #4a5a6c;
  color: #50647c;
  font-size: 11px;
  line-height: 12px;
`;

const ChartTabs = styled.div`
  display: flex;
  height: 25px;
  padding-left: 2px;
  border-top: 1px solid #ccc;
`;

const MenuIcon = styled.svg`
  width: 10px;
  height: 10px;
  margin: 6px 11px 0 auto;
`;

const TabButton = styled.button`
  display: flex;
  width: ${(p) => p.$width}px;
  height: 22px;
  margin-left: ${(p) => (p.$overlap ? -15 : 0)}px;
  font-weight: ${(p) => (p.$bold ? 700 : 400)};
`;

const TabLabel = styled.span`
  display: flex;
  align-items: center;
  justify-content: flex-end;
  gap: 10px;
  flex: 1;
  height: 22px;
  padding: 0 6px 2px 0;
  border: solid #999;
  border-width: 0 1px 1px 0;
  border-radius: 0 0 3px 0;
  background: ${(p) => p.$fill};
  white-space: nowrap;
`;

/* quote */

const Quote = styled.section`
  display: flex;
  flex-direction: column;
  width: 245px;
  border-left: 1px solid #c8c8c8;
  color: #000;
`;

const QuoteTitle = styled.div`
  display: flex;
  align-items: center;
  gap: 4px;
  height: 29px;
  padding: 0 6px 0 24px;
  border-bottom: 1px solid #c8c8c8;
  font: 14px/20px ${mono};
  svg {
    align-self: flex-start;
    margin-top: 3px;
    color: #234;
  }
`;

const QuoteName = styled.span`
  flex: 1;
  padding-left: 16px;
  white-space: nowrap;
  big {
    font-size: 17px;
  }
  sup {
    padding-left: 2px;
    color: #f00;
    font-size: 10px;
    font-weight: 700;
    line-height: 10px;
  }
`;

const QuoteBlock = styled.div`
  padding-top: ${(p) => (p.$gap ? 2 : 0)}px;
  border-bottom: 1px solid #c8c8c8;
`;

const QuoteTable = styled.table`
  width: 100%;
  font: 14px/20px ${lato};
  td {
    height: 20px;
    padding: 0;
    white-space: nowrap;
  }
`;

const Num = styled.td`
  color: ${(p) => p.$color};
  text-align: right;
`;

const LevelCell = styled.td`
  border-right: 1px solid #c8c8c8;
  color: ${(p) => p.$color};
  font-weight: 400;
  text-align: center;
`;

const LevelRow = styled.tr`
  ${(p) => p.$best && css`
    td {
      height: 24px;
    }
    ${Num} {
      font-size: 16px;
      font-weight: 700;
    }
  `}
`;

const DetailRow = styled.tr`
  td {
    height: ${(p) => p.$height}px;
  }
`;

const LabelCell = styled.td`
  && {
    padding-left: ${(p) => p.$pad}px;
    font-size: 15px;
  }
`;

const TickArea = styled.div`
  display: flex;
  align-items: flex-end;
  flex: 1;
`;

const TickTable = styled.table`
  width: 226px;
  font: 12px/21px ${lato};
  td {
    height: 21px;
    padding: 0;
  }
`;

const TickScroll = styled.div`
  display: flex;
  flex-direction: column;
  align-self: stretch;
  width: 16px;
  margin-left: 1px;
  border: 1px solid #dde8f4;
`;

const ScrollArrow = styled.button`
  display: grid;
  place-items: center;
  height: 15px;
  border-bottom: 1px solid #dde8f4;
`;

const ScrollThumb = styled.div`
  display: flex;
  flex-direction: column;
  align-items: center;
  justify-content: center;
  gap: 2px;
  height: 28px;
  margin-top: auto;
  border-radius: 3px;
  background: #ececec;
  i {
    width: 7px;
    height: 1px;
    background: #999;
  }
`;

const QuoteTabs = styled.div`
  display: flex;
  align-items: center;
  height: 21px;
  padding: 0 0 4px 2px;
`;

const ArrowBox = styled.button`
  display: grid;
  place-items: center;
  width: 15px;
  height: 15px;
  border: 1px solid #c0c8d0;
`;

const QuoteTab = styled.button`
  display: flex;
  align-items: center;
  width: 26px;
  color: #000;
  font-size: 13px;
`;

/* account */

const Account = styled.section`
  display: flex;
  flex-direction: column;
  flex: 1;
  min-height: 0;
`;

const AccountBar = styled.div`
  display: flex;
  align-items: center;
  gap: 18px;
  height: 27px;
  padding: 0 0 3px 4px;
  white-space: nowrap;
  span:first-child {
    margin-right: -5px;
  }
`;

const AccountTools = styled.div`
  display: flex;
  align-items: center;
  gap: 6px;
  margin-left: auto;
  padding-right: 6px;
`;

const HammerIcon = styled.svg`
  width: 17px;
  height: 17px;
  margin-left: 6px;
`;

const SquareButton = styled.button`
  width: 20px;
  height: 20px;
  border: 1px solid #bbb;
  border-radius: 4px;
  background: #fdfdfd;
  line-height: 14px;
`;

const AccountBody = styled.div`
  display: flex;
  flex: 1;
  min-height: 0;
  background: #f8f8f8;
`;

const SideMenu = styled.nav`
  width: 95px;
  background: #fdfdfd;
  a {
    display: flex;
    align-items: center;
    justify-content: flex-end;
    gap: 7px;
    width: 72px;
    height: 24px;
    color: inherit;
    text-decoration: none;
  }
  a:nth-child(2) {
    justify-content: flex-start;
    padding-left: 8px;
  }
`;

const OrderPane = styled.div`
  display: flex;
  flex-direction: column;
  width: 235px;
`;

const Form = styled.form`
  display: flex;
  flex-direction: column;
  gap: 4px;
  flex: 1;
  padding: 10px 12px 0 5px;
`;

const FormRow = styled.div`
  display: flex;
  align-items: center;
  gap: 4px;
  height: 24px;
  label {
    width: 26px;
    text-align: center;
  }
`;

const Field = styled.input`
  width: ${(p) => p.$width}px;
  height: 23px;
  padding: 0 2px 2px;
  border: 1px solid #ccc;
  border-radius: 4px;
  background: ${(p) => (p.$muted ? '#f8f8f8' : '#fdfdfd')};
  font-weight: ${(p) => (p.$bold ? 700 : 400)};
`;

const IconButton = styled.button`
  display: grid;
  place-items: center;
  width: ${(p) => p.$width}px;
  height: 21px;
  border: 1px solid #ccc;
  border-radius: 4px;
  background: #fdfdfd;
  &:nth-child(3) {
    margin-right: 3px;
  }
`;

const SpinBox = styled.span`
  display: flex;
  flex-direction: column;
  width: 16px;
  height: 23px;
  background: #fdfdfd;
  button {
    display: grid;
    place-items: center;
    flex: 1;
  }
`;

const LimitRow = styled.div`
  display: flex;
  align-items: center;
  justify-content: space-between;
  height: 16px;
  padding-right: 3px;
`;

const QueryButton = styled.button`
  width: 40px;
  height: 18px;
  border: 1px solid #bbb;
  border-radius: 4px;
  background: #fdfdfd;
  line-height: 14px;
`;

const TradeRow = styled.div`
  display: flex;
  gap: 11px;
`;

const Checks = styled.div`
  display: flex;
  flex-direction: column;
  gap: 2px;
  width: 38px;
  padding-top: 6px;
  label {
    display: flex;
    align-items: center;
    gap: 3px;
    white-space: nowrap;
  }
  input {
    appearance: none;
    flex: none;
    width: 11px;
    height: 11px;
    border: 1px solid #888;
    border-radius: 2px;
    background: #fff;
  }
  input:checked::after {
    content: '✓';
    display: block;
    font: 10px/9px 'DejaVu Sans', sans-serif;
  }
`;

const TradeButton = styled.button`
  display: flex;
  flex-direction: column;
  align-items: center;
  width: 78px;
  height: 60px;
  padding: 0 4px;
  border: 1px solid #ccc;
  border-radius: 4px;
  background: #fdfdfd;
  b {
    width: 100%;
    height: 30px;
    border-bottom: 1px solid #b0b0a0;
    color: ${(p) => p.$color};
    font: 700 15px/28px 'Liberation Mono', monospace;
  }
  span {
    color: ${(p) => p.$soft};
    font: 500 20px/26px 'Noto Serif CJK SC', 'Noto Sans CJK SC', serif;
  }
`;

const FooterTabs = styled.div`
  display: flex;
  height: 24px;
  border-top: 1px solid #ccc;
  background: #efefef;
`;

const ScrollHint = styled.button`
  display: grid;
  place-items: center;
  width: 16px;
  height: 22px;
  margin: ${(p) => (p.$end ? '0 6px 0 auto' : '0 4px 0 0')};
`;

const Collapse = styled.button`
  display: flex;
  align-items: center;
  justify-content: center;
  width: 10px;
`;

const TablesPane = styled.div`
  display: flex;
  flex-direction: column;
  flex: 1;
  min-width: 0;
`;

const ActionRow = styled.div`
  display: flex;
  gap: 5px;
  height: 22px;
  padding-left: 5px;
`;

const ActionButton = styled.button`
  width: ${(p) => p.$width}px;
  border: 1px solid #ccc;
  border-radius: 4px;
  background: #fdfdfd;
  font-size: 13px;
  white-space: nowrap;
`;

const TableSplit = styled.div`
  display: flex;
  gap: 4px;
  flex: 1;
  min-height: 0;
`;

const PositionPane = styled.div`
  display: flex;
  flex-direction: column;
  width: 328px;
  background: #fdfdfd;
`;

const OrdersPane = styled.div`
  display: flex;
  flex-direction: column;
  flex: 1;
  min-width: 0;
  background: #fdfdfd;
`;

const TableClip = styled.div`
  flex: 1;
  min-height: 0;
  overflow: hidden;
`;

const DataTable = styled.table`
  width: ${(p) => p.$width};
  th,
  td {
    height: 21px;
    padding: 0 4px 1px;
    border: solid #ececec;
    border-width: 0 1px 1px 0;
    text-align: left;
    font-weight: 400;
    white-space: nowrap;
  }
  td {
    padding-left: 6px;
  }
  th {
    height: 24px;
    padding-bottom: 2px;
    background: #f8f8f8;
    border-color: #c8c8c8;
    border-width: 1px 2px 1px 0;
  }
  th:last-child,
  td:last-child {
    border-right: 0;
  }
`;

const Right = styled.th`
  && {
    text-align: right;
  }
`;

const RightCell = styled.td`
  && {
    padding-right: 6px;
    color: ${(p) => p.$color};
    text-align: right;
  }
`;

const ShortRow = styled.tr`
  td {
    border-bottom: 0;
  }
`;

const HScroll = styled.div`
  height: 16px;
  padding: 13px 0 0 17px;
  background: #fdfdfd;
  i {
    display: block;
    width: 116px;
    height: 2px;
    background: #aaa;
  }
`;

const AccountTabs = styled.div`
  height: 24px;
  padding-left: 1px;
  border: 1px solid #c8c8c8;
  button {
    width: 61px;
    height: 22px;
    padding-bottom: 2px;
    border: solid #c8c8c8;
    border-width: 0 1px;
    color: #c05010;
    font-size: 14px;
  }
`;

const Ticker = styled.div`
  display: grid;
  grid-template-columns: 132px 51px 52px 160px 117px 59px 42px 164px 143px 51px 50px 144px 132px 44px 40px 1fr;
  height: 8px;
  padding: 3px 0 0 9px;
  overflow: hidden;
  background: #fdfdfd;
  font-size: 13px;
  line-height: 18px;
  em {
    color: #e00000;
    font-style: normal;
  }
`;

/* right side */

const Insight = styled.aside`
  display: flex;
  flex-direction: column;
  width: 150px;
`;

const InsightBody = styled.div`
  flex: 1;
  background: ${sky};
  color: #0020c0;
  font: 12px/20px ${mono};
  p {
    margin: 0;
    padding: 1px 0 0 5px;
    font-size: 13px;
  }
`;

const InsightTitle = styled.div`
  display: flex;
  justify-content: space-between;
  height: 24px;
  padding: 2px 5px 0 4px;
  border-bottom: 1px solid #000;
  color: #000;
`;

const PeriodStrip = styled.div`
  width: 17px;
  padding: 212px 0 0 1px;
  overflow: hidden;
`;

const Dots = styled.div`
  width: 20px;
  height: 6px;
  margin-left: 5px;
  border-top: 2px dotted #999;
`;

const PeriodItem = styled.button`
  display: grid;
  place-items: center;
  width: 27px;
  height: 22px;
  font-size: 13px;
  ${(p) => p.$on && css`
    border: 1px solid #999;
    border-radius: 4px;
    background: #e4e4e4;
  `}
`;

const StripArrow = styled.svg`
  width: 4px;
  height: 6px;
  margin: 4px 0 0 5px;
`;

const Notice = styled.aside`
  position: absolute;
  right: 0;
  bottom: 0;
  width: 324px;
  height: 173px;
  overflow: hidden;
  background: #fff;
  border: solid #999;
  border-width: 1px 0 0 1px;
  box-shadow: 0 0 12px rgba(0, 0, 0, 0.3);
  a {
    display: block;
    margin: 69px 0 0 6px;
    color: #0000e0;
    font-weight: 700;
  }
`;

const NoticeHead = styled.div`
  display: flex;
  justify-content: space-between;
  align-items: center;
  height: 24px;
  padding-left: 3px;
  color: #999;
`;

const NoticeList = styled.ul`
  margin: 0;
  padding: 2px 0 0 1px;
  list-style: none;
  color: #000;
  font: 12px/17px ${mono};
`;

export default App;
